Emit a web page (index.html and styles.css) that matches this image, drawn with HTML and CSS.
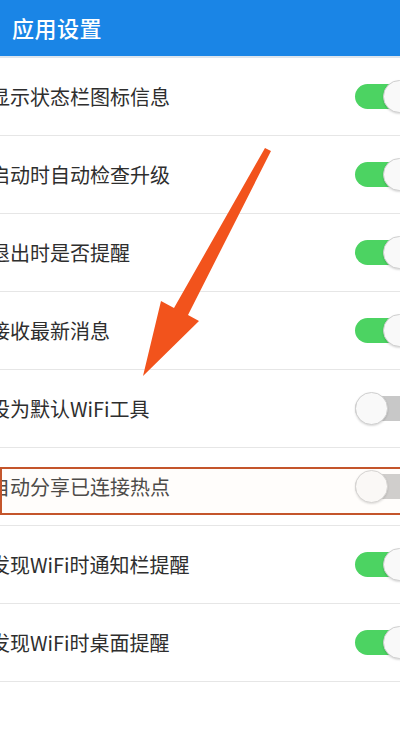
FILE: index.html
```html
<!DOCTYPE html>
<html lang="zh-CN">
<head>
    <meta charset="UTF-8">
    <meta name="viewport" content="width=device-width, initial-scale=1.0">
    <title>应用设置</title>
    <link rel="stylesheet" href="styles.css">
</head>
<body>
    <div class="page">
        <div class="topbar">
            <svg class="back" width="14" height="22" viewBox="0 0 14 22"><path d="M11 3 L3 11 L11 19" fill="none" stroke="#fff" stroke-width="2.5"/></svg>
            <h1>应用设置</h1>
        </div>

        <div class="list">
            <div class="row">
                <span class="label">显示状态栏图标信息</span>
                <span class="switch on"><span class="knob"></span></span>
            </div>
            <div class="row">
                <span class="label">启动时自动检查升级</span>
                <span class="switch on"><span class="knob"></span></span>
            </div>
            <div class="row">
                <span class="label">退出时是否提醒</span>
                <span class="switch on"><span class="knob"></span></span>
            </div>
            <div class="row">
                <span class="label">接收最新消息</span>
                <span class="switch on"><span class="knob"></span></span>
            </div>
            <div class="row">
                <span class="label">设为默认WiFi工具</span>
                <span class="switch"><span class="knob"></span></span>
            </div>
            <div class="row marked">
                <span class="label">自动分享已连接热点</span>
                <span class="switch"><span class="knob"></span></span>
            </div>
            <div class="row">
                <span class="label">发现WiFi时通知栏提醒</span>
                <span class="switch on"><span class="knob"></span></span>
            </div>
            <div class="row">
                <span class="label">发现WiFi时桌面提醒</span>
                <span class="switch on"><span class="knob"></span></span>
            </div>
        </div>

        <!-- annotation arrow drawn over the list -->
        <svg class="arrow" width="400" height="732" viewBox="0 0 400 732">
            <polygon points="265,148 271,151 188,315 199,321 143,376 161,301 174,308" fill="#f2531c"/>
        </svg>
    </div>
</body>
</html>
```

FILE: styles.css
```css
/* Settings screen with toggle rows */
body {
    margin: 0;
    background-color: #fff;
    font-family: "Noto Sans CJK SC", "Noto Sans", sans-serif;
    color: #2e2e2e;
    overflow: hidden;
}
.page {
    position: relative; /* for the arrow overlay */
    width: 400px;
    height: 732px;
    overflow: hidden;
}
.topbar {
    height: 56px;
    background-color: #1a85e6;
    border-bottom: 2px solid #dde5ee;
    display: flex;
    align-items: center;
    gap: 10px;
}
.back {
    margin-left: -12px; /* screen is cropped, only the tip shows */
}
.topbar h1 {
    margin: 0 0 2px 0;
    font-size: 22px;
    font-weight: 500;
    color: #fff;
    letter-spacing: 0.5px;
}
.row {
    position: relative;
    height: 77px;
    border-bottom: 1px solid #e6e6e6;
    display: flex;
    align-items: center;
    justify-content: space-between;
}
.label {
    margin-left: -10px;
    font-size: 20px;
    white-space: nowrap;
}
/* annotation box round one row */
.row.marked::after {
    content: "";
    position: absolute;
    left: 0;
    right: -10px;
    top: 19px;
    bottom: 10px;
    border: 2px solid #c4552b;
    background-color: rgba(255, 240, 225, 0.15);
}
.switch {
    position: relative;
    width: 60px;
    height: 25px;
    margin-right: -15px;
    border-radius: 13px;
    background-color: #c8c8c8;
}
.switch.on {
    background-color: #4cd362;
}
.knob {
    position: absolute;
    top: -4px;
    left: 0;
    width: 31px;
    height: 31px;
    border-radius: 50%;
    background-color: #f9f9f9;
    border: 1px solid #cfcfcf;
    box-shadow: 0 1px 2px rgba(0, 0, 0, 0.15);
}
.switch.on .knob {
    left: 28px;
}
.arrow {
    position: absolute;
    top: 0;
    left: 0;
    pointer-events: none;
}
```
